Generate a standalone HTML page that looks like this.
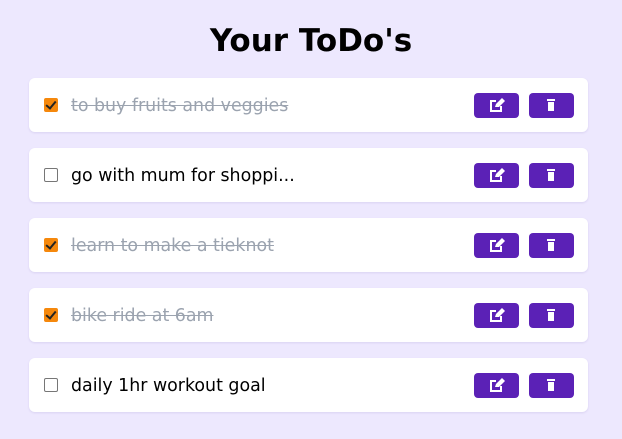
<!DOCTYPE html>
<html><head><style>
body{margin:0;width:622px;height:439px;background:#ede8fe;font-family:"DejaVu Sans",Verdana,sans-serif;overflow:hidden}
h1{margin:0;position:absolute;top:23px;left:0;width:622px;text-align:center;font-size:31px;font-weight:bold;color:#000}
.card{position:absolute;left:29px;width:559px;height:54px;background:#fff;border-radius:6px;box-shadow:0 1px 2px rgba(80,60,160,0.12)}
.cb{position:absolute;left:15px;top:20px;width:12px;height:12px;border:1px solid #767676;border-radius:2px;background:#fff}
.cb.on{background:#f5880c;border-color:#f5880c}
.cb.on::after{content:"";position:absolute;left:3px;top:0px;width:4px;height:8px;border:solid #222;border-width:0 2px 2px 0;transform:rotate(40deg)}
.t{position:absolute;left:42px;top:18px;font-size:17.4px;color:#000;white-space:nowrap}
.t.done{color:#9ba3af;text-decoration:line-through}
.b{position:absolute;top:15px;width:45px;height:25px;background:#5b21b6;border-radius:4px}
.b svg{position:absolute;left:15px;top:5px}
</style></head><body>
<h1>Your ToDo's</h1>
<div class="card" style="top:78px"><div class="cb on"></div><div class="t done">to buy fruits and veggies</div>
<div class="b" style="left:445px"><svg width="16" height="15" viewBox="0 0 16 15"><path d="M7 3H2v10h10V8" fill="none" stroke="#fff" stroke-width="2"/><path d="M6 9l1-3 6-6 3 3-6 6z" fill="#fff"/></svg></div>
<div class="b" style="left:500px"><svg width="14" height="15" viewBox="0 0 14 15"><rect x="3" y="1" width="8" height="2" fill="#fff"/><rect x="4" y="4" width="6" height="9" fill="#fff"/></svg></div></div>
<div class="card" style="top:148px"><div class="cb"></div><div class="t">go with mum for shoppi...</div>
<div class="b" style="left:445px"><svg width="16" height="15" viewBox="0 0 16 15"><path d="M7 3H2v10h10V8" fill="none" stroke="#fff" stroke-width="2"/><path d="M6 9l1-3 6-6 3 3-6 6z" fill="#fff"/></svg></div>
<div class="b" style="left:500px"><svg width="14" height="15" viewBox="0 0 14 15"><rect x="3" y="1" width="8" height="2" fill="#fff"/><rect x="4" y="4" width="6" height="9" fill="#fff"/></svg></div></div>
<div class="card" style="top:218px"><div class="cb on"></div><div class="t done">learn to make a tieknot</div>
<div class="b" style="left:445px"><svg width="16" height="15" viewBox="0 0 16 15"><path d="M7 3H2v10h10V8" fill="none" stroke="#fff" stroke-width="2"/><path d="M6 9l1-3 6-6 3 3-6 6z" fill="#fff"/></svg></div>
<div class="b" style="left:500px"><svg width="14" height="15" viewBox="0 0 14 15"><rect x="3" y="1" width="8" height="2" fill="#fff"/><rect x="4" y="4" width="6" height="9" fill="#fff"/></svg></div></div>
<div class="card" style="top:288px"><div class="cb on"></div><div class="t done">bike ride at 6am</div>
<div class="b" style="left:445px"><svg width="16" height="15" viewBox="0 0 16 15"><path d="M7 3H2v10h10V8" fill="none" stroke="#fff" stroke-width="2"/><path d="M6 9l1-3 6-6 3 3-6 6z" fill="#fff"/></svg></div>
<div class="b" style="left:500px"><svg width="14" height="15" viewBox="0 0 14 15"><rect x="3" y="1" width="8" height="2" fill="#fff"/><rect x="4" y="4" width="6" height="9" fill="#fff"/></svg></div></div>
<div class="card" style="top:358px"><div class="cb"></div><div class="t">daily 1hr workout goal</div>
<div class="b" style="left:445px"><svg width="16" height="15" viewBox="0 0 16 15"><path d="M7 3H2v10h10V8" fill="none" stroke="#fff" stroke-width="2"/><path d="M6 9l1-3 6-6 3 3-6 6z" fill="#fff"/></svg></div>
<div class="b" style="left:500px"><svg width="14" height="15" viewBox="0 0 14 15"><rect x="3" y="1" width="8" height="2" fill="#fff"/><rect x="4" y="4" width="6" height="9" fill="#fff"/></svg></div></div>
</body></html>
